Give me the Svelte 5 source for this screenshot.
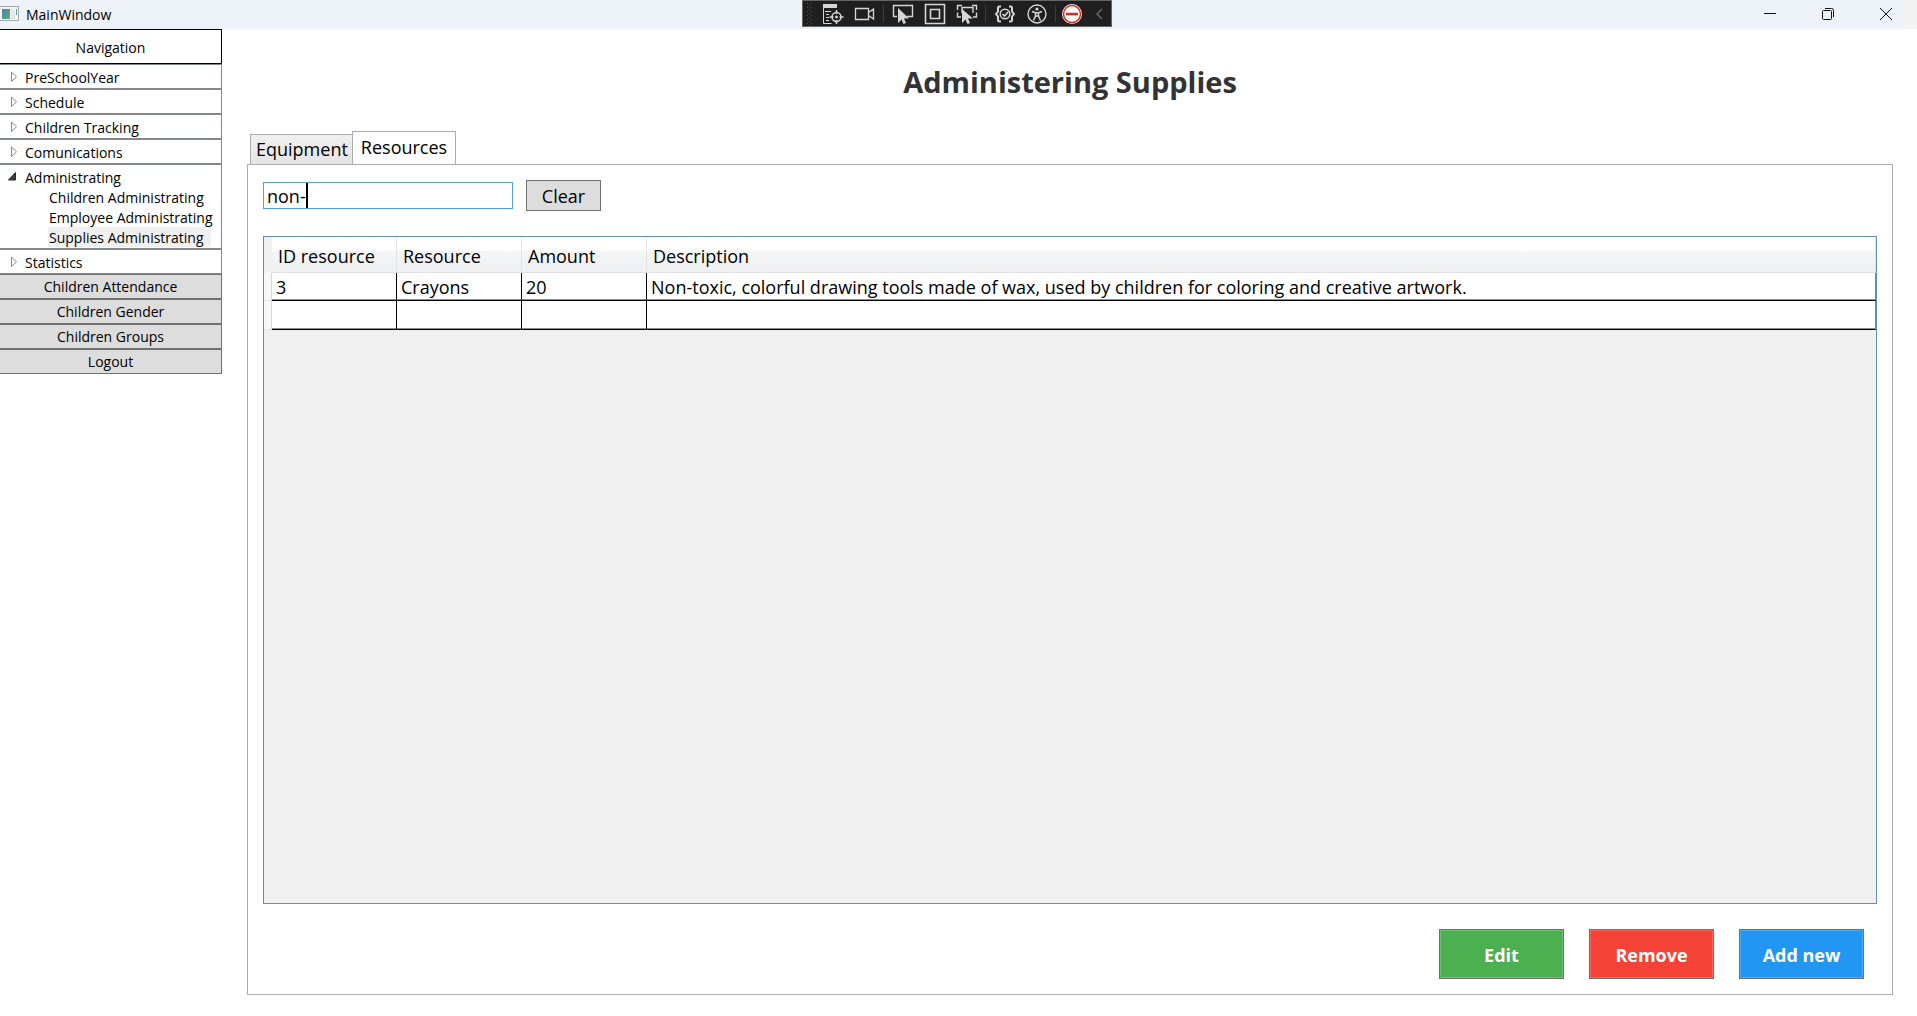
<script>
  let search = $state('non-');
  let activeTab = $state('Resources');
  let open = $state({ Administrating: true });

  const sections = [
    { name: 'PreSchoolYear', items: [] },
    { name: 'Schedule', items: [] },
    { name: 'Children Tracking', items: [] },
    { name: 'Comunications', items: [] },
    {
      name: 'Administrating',
      items: ['Children Administrating', 'Employee Administrating', 'Supplies Administrating'],
    },
    { name: 'Statistics', items: [] },
  ];
  const selected = 'Supplies Administrating';
  const reports = ['Children Attendance', 'Children Gender', 'Children Groups', 'Logout'];
  const tabs = ['Equipment', 'Resources'];
  const resources = [
    {
      id: 3,
      name: 'Crayons',
      amount: 20,
      description:
        'Non-toxic, colorful drawing tools made of wax, used by children for coloring and creative artwork.',
    },
  ];
</script>

<div class="window">
  <header class="titlebar">
    <div class="caption">
      <svg class="app-icon" width="19" height="16" viewBox="0 0 19 16" aria-hidden="true">
        <defs>
          <linearGradient id="pane" x1="0" y1="0" x2="1" y2="1">
            <stop offset="0" stop-color="#4a7fa5" />
            <stop offset="1" stop-color="#5fae7c" />
          </linearGradient>
        </defs>
        <rect x="-0.5" y="0.5" width="19" height="14" fill="#f4f4f4" stroke="#a3a9ae" />
        <rect x="2" y="3" width="8" height="10" fill="url(#pane)" />
        <rect x="11" y="3" width="4" height="10" fill="#e6e9ea" />
        <rect x="16" y="3" width="1" height="6" fill="#58a29a" />
      </svg>
      <span>MainWindow</span>
    </div>

    <div class="debugbar" role="toolbar" aria-label="Debug tools">
      <svg class="grip" width="14" height="25" viewBox="0 0 14 25" aria-hidden="true">
        <g fill="#505050">
          {#each [2, 6, 10, 14, 18, 22] as y}
            <rect x="4" {y} width="1" height="1" />
            <rect x="8" {y} width="1" height="1" />
            <rect x="6" y={y + 2} width="1" height="1" />
          {/each}
        </g>
      </svg>
      <button aria-label="Live visual tree">
        <svg width="22" height="22" viewBox="0 0 22 22">
          <path d="M1 1h14v4H1z" fill="#d6d6d6" stroke="none" />
          <path d="M1.500 4v16.500h8M3 8.500h6M4 11.500h3M4 14.500h3M4 17.500h3" />
          <circle cx="14.500" cy="14" r="4.500" stroke-width="1.500" />
          <circle cx="14.500" cy="14" r="1" fill="#d6d6d6" />
          <path d="M14.500 7v4M14.500 17v4M7.500 14h4M17.500 14h4" stroke-width="1.500" />
        </svg>
      </button>
      <button aria-label="Record">
        <svg width="22" height="22" viewBox="0 0 22 22">
          <path d="M1.500 5.500h13v11h-13zM14.500 9.500l5-3.500v10l-5-3.500" stroke-width="1.300" />
        </svg>
      </button>
      <i class="sep"></i>
      <button aria-label="Select element">
        <svg width="22" height="22" viewBox="0 0 22 22">
          <path d="M5 13.500H1.500v-11h19v11H15" stroke-width="1.400" />
          <path d="M6 5v15l3.500-3.500 2 4.500 2.500-1-2-4.500h5z" fill="#d6d6d6" stroke="none" />
        </svg>
      </button>
      <button aria-label="Display layout adorners">
        <svg width="22" height="22" viewBox="0 0 22 22">
          <path d="M1.500 1.500h19v19h-19zM6.500 6.500h9v9h-9z" stroke-width="1.600" />
        </svg>
      </button>
      <button aria-label="Track focused element">
        <svg width="22" height="22" viewBox="0 0 22 22">
          <path
            d="M6 2.500H1.500V7M16 2.500h4.500V7M1.500 9.500V14H5M20.500 9.500V14H17M6 10V4.500h11V10"
            stroke-width="1.400"
          />
          <path d="M6 6v14l3.500-3.500 2 4.500 2.500-1-2-4.500h5z" fill="#d6d6d6" stroke="none" />
        </svg>
      </button>
      <i class="sep"></i>
      <button aria-label="Binding failures">
        <svg width="22" height="22" viewBox="0 0 22 22">
          <path
            d="M7 3.500H5.500Q4 3.500 4 5v3.500L2 11l2 2.500V17q0 1.500 1.500 1.500H7M15 3.500h1.500Q18 3.500 18 5v3.500l2 2.500-2 2.500V17q0 1.500-1.500 1.500H15"
            stroke-width="2"
          />
          <circle cx="11" cy="11" r="4.800" stroke-width="1.500" />
          <path d="M8.500 11l2 2 3.500-4" stroke-width="1.600" />
        </svg>
      </button>
      <button aria-label="Accessibility checks">
        <svg width="22" height="22" viewBox="0 0 22 22">
          <circle cx="11" cy="11" r="9" stroke-width="1.400" />
          <circle cx="11" cy="6" r="1.600" fill="#d6d6d6" stroke="none" />
          <path d="M6 8.500l3.500 1.200h3L16 8.500M9.500 10v3l-2 4.500M12.500 10v3l2 4.500M9.500 13h3" stroke-width="1.500" />
        </svg>
      </button>
      <i class="sep"></i>
      <button class="stop" aria-label="Hot reload unavailable">
        <svg width="22" height="22" viewBox="0 0 22 22">
          <circle cx="11" cy="11" r="10" fill="#fff" stroke="none" />
          <circle cx="11" cy="11" r="8.500" stroke="#e5241c" stroke-width="1.500" />
          <path d="M5 11h12" stroke="#e5241c" stroke-width="2.500" />
        </svg>
      </button>
      <button class="collapse" aria-label="Collapse toolbar">
        <svg width="8" height="12" viewBox="0 0 8 12">
          <path d="M7 1L2 6l5 5" stroke="#707070" stroke-width="1.300" />
        </svg>
      </button>
    </div>

    <div class="controls">
      <button aria-label="Minimize">
        <svg width="14" height="14" viewBox="0 0 14 14"><path d="M1 6.500h12" /></svg>
      </button>
      <button aria-label="Restore">
        <svg width="14" height="14" viewBox="0 0 14 14">
          <rect x="1.500" y="3.500" width="9" height="9" rx="1" />
          <path d="M4 1.500h6.500q2 0 2 2V10" />
        </svg>
      </button>
      <button aria-label="Close">
        <svg width="14" height="14" viewBox="0 0 14 14"><path d="M1 1l12 12M13 1L1 13" /></svg>
      </button>
    </div>
  </header>

  <div class="body">
    <nav class="sidebar" aria-label="Navigation">
      <div class="nav-title">Navigation</div>
      {#each sections as section}
        <div class="section">
          <button
            class="section-head"
            aria-expanded={!!open[section.name]}
            onclick={() => (open[section.name] = !open[section.name])}
          >
            <svg width="12" height="12" viewBox="0 0 12 12" aria-hidden="true">
              {#if open[section.name]}
                <path d="M8.500 1.500v7.500h-7z" fill="#404040" stroke="#262626" />
              {:else}
                <path d="M4.500 1v9.500l5-4.750z" fill="#fff" stroke="#8a8a8a" />
              {/if}
            </svg>
            {section.name}
          </button>
          {#if open[section.name] && section.items.length}
            <ul>
              {#each section.items as item}
                <li><button class="leaf" class:selected={item === selected}>{item}</button></li>
              {/each}
            </ul>
          {/if}
        </div>
      {/each}
      {#each reports as report}
        <button class="report">{report}</button>
      {/each}
    </nav>

    <main>
      <h1>Administering Supplies</h1>
      <div class="tabs" role="tablist">
        {#each tabs as tab}
          <button
            class="tab"
            class:active={tab === activeTab}
            role="tab"
            aria-selected={tab === activeTab}
            onclick={() => (activeTab = tab)}>{tab}</button
          >
        {/each}
      </div>
      <section class="panel" role="tabpanel" aria-label={activeTab}>
        <div class="search">
          <div class="field">
            <input type="text" aria-label="Search resources" bind:value={search} />
            <i class="caret"></i>
          </div>
          <button class="clear" onclick={() => (search = '')}>Clear</button>
        </div>

        <div class="grid">
          <table>
            <colgroup>
              <col class="c-mark" /><col class="c-mid" /><col class="c-mid" /><col class="c-mid" /><col />
            </colgroup>
            <thead>
              <tr>
                <td class="mark"></td>
                <th>ID resource</th>
                <th>Resource</th>
                <th>Amount</th>
                <th>Description</th>
              </tr>
            </thead>
            <tbody>
              {#each resources as r}
                <tr>
                  <td class="mark"></td>
                  <td>{r.id}</td>
                  <td>{r.name}</td>
                  <td>{r.amount}</td>
                  <td>{r.description}</td>
                </tr>
              {/each}
              <tr class="blank">
                <td class="mark"></td>
                <td></td>
                <td></td>
                <td></td>
                <td></td>
              </tr>
            </tbody>
          </table>
        </div>

        <div class="actions">
          <button class="edit">Edit</button>
          <button class="remove">Remove</button>
          <button class="add">Add new</button>
        </div>
      </section>
    </main>
  </div>
</div>

<style>
  :global(body) {
    margin: 0;
    background: #fff;
  }
  .window {
    display: flex;
    flex-direction: column;
    min-height: 100vh;
    font-family: 'Segoe UI', 'Open Sans', 'Noto Sans', sans-serif;
    font-size: 14px;
    color: #000;
  }
  .window,
  .window * {
    box-sizing: border-box;
  }
  button {
    margin: 0;
    padding: 0;
    border: 0;
    border-radius: 0;
    background: none;
    font: inherit;
    color: inherit;
  }

  .titlebar {
    display: grid;
    grid-template-columns: 802fr 310px 805fr;
    height: 29px;
    background: linear-gradient(to left, #f3f3f3 6px, #eef3fa 14px);
  }
  .caption {
    display: flex;
    align-items: center;
    gap: 7px;
    padding-bottom: 1px;
  }
  .debugbar {
    display: flex;
    align-items: center;
    height: 27px;
    border: 1px solid #666;
    background: #1f1f1f;
  }
  .debugbar button {
    display: grid;
    place-items: center;
    flex: none;
    width: 32px;
    height: 25px;
  }
  .debugbar .stop {
    width: 26px;
  }
  .debugbar .collapse {
    width: 28px;
  }
  .debugbar svg {
    flex: none;
    fill: none;
    stroke: #d6d6d6;
  }
  .debugbar .grip {
    stroke: none;
  }
  .sep {
    flex: none;
    width: 1px;
    height: 17px;
    margin: 0 3px 0 2px;
    background: #3d3d3d;
  }
  .controls {
    display: flex;
    justify-content: flex-end;
    padding: 0 2px 1px 0;
  }
  .controls button {
    display: grid;
    place-items: center;
    width: 58px;
  }
  .controls svg {
    fill: none;
    stroke: #111;
  }

  .body {
    display: flex;
    flex: 1;
  }
  .sidebar {
    flex: none;
    width: 222px;
  }
  .nav-title {
    display: grid;
    place-items: center;
    height: 35px;
    padding-top: 2px;
    border: 1px solid #000;
    border-left: 0;
  }
  .section {
    border: 1px solid #828790;
    border-left: 0;
    padding-bottom: 1px;
  }
  .section-head {
    display: flex;
    align-items: center;
    gap: 6px;
    width: 100%;
    height: 22px;
    padding: 2px 0 0 7px;
    text-align: left;
  }
  ul {
    margin: 0;
    padding: 0 0 0 48px;
    list-style: none;
  }
  li {
    height: 20px;
  }
  .leaf {
    height: 20px;
    padding: 1px 7px 0 1px;
    line-height: 19px;
    white-space: nowrap;
  }
  .leaf.selected {
    background: #f0f0f0;
  }
  .report {
    display: block;
    width: 100%;
    height: 25px;
    padding-top: 1px;
    border: 1px solid #707070;
    border-left: 0;
    background: #ddd;
    line-height: 22px;
  }

  main {
    display: flex;
    flex: 1;
    flex-direction: column;
    min-width: 0;
    padding: 32px 24px 21px 25px;
    font-size: 18px;
  }
  h1 {
    margin: 0 0 28px;
    color: #333;
    font-size: 29px;
    font-weight: 700;
    line-height: 42px;
    text-align: center;
  }
  .tabs {
    display: flex;
    align-items: flex-end;
    padding-left: 3px;
    margin-bottom: -1px;
  }
  .tab {
    height: 31px;
    padding: 0 4px 0 5px;
    border: 1px solid #acacac;
    border-right: 0;
    background: linear-gradient(#f0f0f0, #e5e5e5);
    line-height: 29px;
  }
  .tab.active {
    height: 34px;
    padding: 0 8px 2px;
    border-right: 1px solid #acacac;
    border-bottom: 0;
    background: #fff;
  }
  .panel {
    display: flex;
    flex: 1;
    flex-direction: column;
    padding: 15px;
    border: 1px solid #acacac;
  }
  .search {
    display: flex;
    align-items: center;
    gap: 13px;
    margin-bottom: 25px;
  }
  .field {
    position: relative;
    width: 250px;
  }
  input {
    display: block;
    width: 100%;
    height: 27px;
    margin: 0;
    padding: 0 3px;
    border: 1px solid #569de5;
    outline: 0;
    background: #fff;
    color: #000;
    font: inherit;
  }
  .caret {
    position: absolute;
    top: 1px;
    left: 43px;
    width: 2px;
    height: 25px;
    background: #000;
  }
  .clear {
    width: 75px;
    height: 31px;
    border: 1px solid #707070;
    background: #ddd;
  }

  .grid {
    flex: 1;
    border: 1px solid #688caf;
    background: #f0f0f0;
  }
  table {
    width: 100%;
    table-layout: fixed;
    border-spacing: 0;
  }
  .c-mark {
    width: 8px;
  }
  .c-mid {
    width: 125px;
  }
  th {
    height: 36px;
    padding: 2px 6px 0;
    border-right: 1px solid #e2e3e5;
    border-bottom: 1px solid #dfe0e2;
    background: linear-gradient(#fff 0 40%, #f5f6f8 40%, #eff0f2);
    font-weight: 400;
    text-align: left;
  }
  td {
    height: 28px;
    padding: 0 4px;
    border-right: 1px solid #000;
    border-bottom: 1px solid #000;
    background: #fff;
    box-shadow: inset 0 -1px #909090;
    line-height: 26px;
    white-space: nowrap;
  }
  td:last-child {
    border-right-color: #808080;
  }
  .blank td {
    height: 29px;
  }
  .mark {
    padding: 0;
    border-right: 1px solid #d8d8d8;
    border-bottom: 1px solid #e6e6e6;
    background: #f7f8f9;
    box-shadow: none;
  }
  thead .mark {
    border: 0;
    background: #f0f0f0;
  }

  .actions {
    display: flex;
    justify-content: flex-end;
    gap: 25px;
    padding: 25px 13px 0 0;
  }
  .actions button {
    width: 125px;
    height: 50px;
    padding-top: 2px;
    border: 1px solid #707070;
    box-shadow: inset 0 0 0 1px rgba(255, 255, 255, 0.2);
    color: #fff;
    font-weight: 700;
  }
  .actions .edit {
    background: #4caf50;
  }
  .actions .remove {
    background: #f44336;
  }
  .actions .add {
    background: #2196f3;
  }
</style>
